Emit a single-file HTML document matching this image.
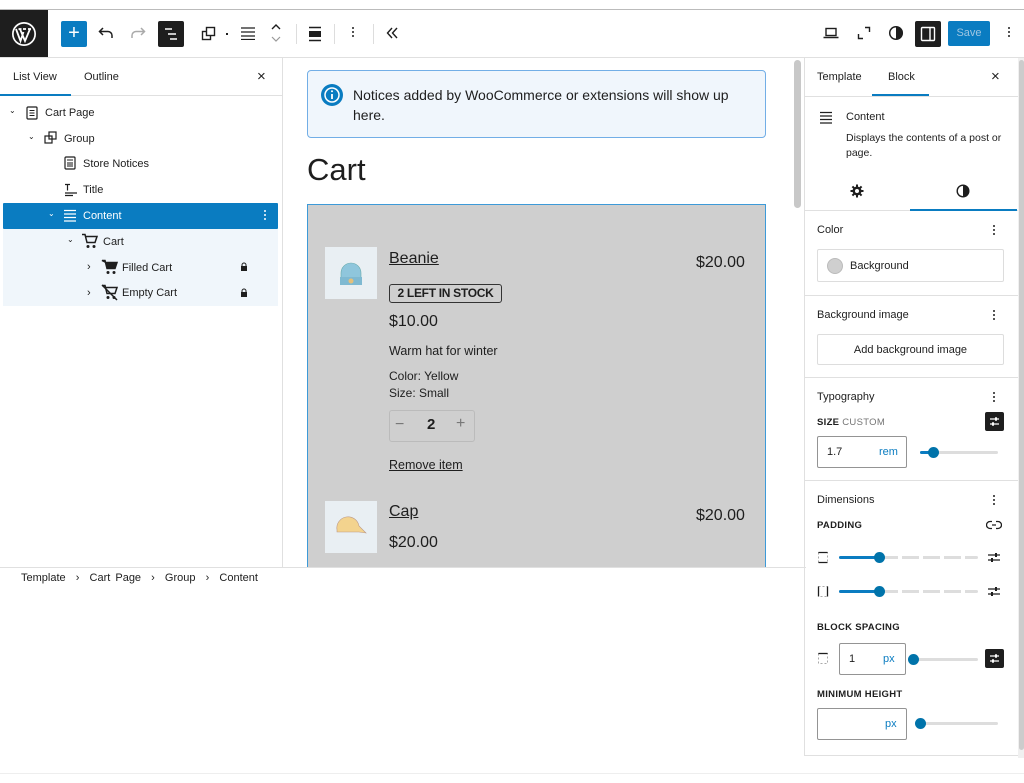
<!DOCTYPE html>
<html><head><meta charset="utf-8"><style>
*{box-sizing:border-box;margin:0;padding:0}
body{width:1024px;height:783px;overflow:hidden;background:#fff;font-family:"Liberation Sans",sans-serif;color:#1e1e1e;position:relative;font-size:11px}
.a{position:absolute}
.ic{position:absolute}
.hd{font-size:11px;font-weight:600;color:#1e1e1e}
.lbl{font-size:9.5px;font-weight:600;letter-spacing:.3px;color:#1e1e1e}
.dots{position:absolute;width:3px}
.dots i{display:block;width:2px;height:2px;background:#1e1e1e;border-radius:1px;margin:0 0 2px}
.track{position:absolute;height:3px;background:#ddd;border-radius:2px}
.knob{position:absolute;width:11px;height:11px;border-radius:50%;background:#0073aa}
.inp{position:absolute;border:1px solid #949494;border-radius:2px;background:#fff}
.tree{position:absolute;left:0;font-size:11px;color:#1e1e1e}
</style></head><body>
<!-- top strip -->
<div class="a" style="left:0;top:9px;width:1024px;height:1px;background:#bbb"></div>
<!-- toolbar -->
<div class="a" style="left:0;top:10px;width:48px;height:48px;background:#1e1e1e"></div>
<svg class="ic" style="left:11px;top:21px" width="26" height="26" viewBox="0 0 26 26"><circle cx="13" cy="13" r="12" fill="#fff"/><circle cx="13" cy="13" r="10.3" fill="#1e1e1e"/><path d="M5 8 L9.5 20 L12.5 11 M9 8 L14 20 L19 8 M7.5 8h3 M12 8h3 M17 8h3" stroke="#fff" stroke-width="1.8" fill="none"/></svg>
<div class="a" style="left:0;top:57px;width:1024px;height:1px;background:#e0e0e0"></div>
<div class="a" style="left:61px;top:21px;width:26px;height:26px;background:#0a7cc1;border-radius:2px;color:#fff;font-size:20px;line-height:25px;text-align:center">+</div>
<svg class="ic" style="left:98px;top:26px" width="16" height="14" viewBox="0 0 16 14"><path d="M5 2 L1.5 5.5 L5 9 M1.5 5.5 H10 A4 4 0 0 1 14 9.5 V12" stroke="#1e1e1e" stroke-width="1.5" fill="none"/></svg>
<svg class="ic" style="left:130px;top:26px" width="16" height="14" viewBox="0 0 16 14"><path d="M11 2 L14.5 5.5 L11 9 M14.5 5.5 H6 A4 4 0 0 0 2 9.5 V12" stroke="#aaa" stroke-width="1.5" fill="none"/></svg>
<div class="a" style="left:158px;top:21px;width:26px;height:26px;background:#1e1e1e;border-radius:2px"></div>
<svg class="ic" style="left:163px;top:27px" width="16" height="14"><path d="M2 2h7M5 7h8M7 12h7" stroke="#fff" stroke-width="1.6"/></svg>
<svg class="ic" style="left:201px;top:26px" width="16" height="16"><rect x="1.5" y="5.5" width="8" height="8" fill="none" stroke="#1e1e1e" stroke-width="1.4"/><rect x="5.5" y="1.5" width="8" height="8" fill="#fff" stroke="#1e1e1e" stroke-width="1.4"/></svg>
<div class="a" style="left:226px;top:33px;width:2px;height:2px;background:#1e1e1e"></div>
<svg class="ic" style="left:240px;top:26px" width="16" height="14"><path d="M1 2h14M1 6h14M1 10h14M1 13.5h14" stroke="#1e1e1e" stroke-width="1.3"/></svg>
<svg class="ic" style="left:270px;top:22px" width="12" height="22"><path d="M2 7l4-4 4 4" stroke="#1e1e1e" stroke-width="1.4" fill="none"/><path d="M2 15l4 4 4-4" stroke="#999" stroke-width="1.2" fill="none"/></svg>
<div class="a" style="left:296px;top:24px;width:1px;height:20px;background:#ddd"></div>
<svg class="ic" style="left:308px;top:26px" width="14" height="16"><path d="M1 1.5h12M1 14.5h12" stroke="#1e1e1e" stroke-width="1.4"/><rect x="1" y="5" width="12" height="6" fill="#1e1e1e"/></svg>
<div class="a" style="left:334px;top:24px;width:1px;height:20px;background:#ddd"></div>
<div class="dots" style="left:352px;top:27px"><i></i><i></i><i></i></div>
<div class="a" style="left:373px;top:24px;width:1px;height:20px;background:#ddd"></div>
<svg class="ic" style="left:386px;top:27px" width="12" height="12"><path d="M6 1L1.5 6 6 11M11 1L6.5 6 11 11" stroke="#1e1e1e" stroke-width="1.4" fill="none"/></svg>
<!-- right toolbar -->
<svg class="ic" style="left:823px;top:27px" width="16" height="12"><rect x="3" y="1.5" width="10" height="7" fill="none" stroke="#1e1e1e" stroke-width="1.4"/><path d="M0.5 10.5h15" stroke="#1e1e1e" stroke-width="1.5"/></svg>
<svg class="ic" style="left:857px;top:26px" width="14" height="14"><path d="M1.5 8v4.5h4.5M8 1.5h4.5v4.5" stroke="#1e1e1e" stroke-width="1.4" fill="none"/></svg>
<svg class="ic" style="left:888px;top:25px" width="16" height="16"><circle cx="8" cy="8" r="6.3" fill="none" stroke="#1e1e1e" stroke-width="1.5"/><path d="M8 1.7A6.3 6.3 0 0 1 8 14.3Z" fill="#1e1e1e"/></svg>
<div class="a" style="left:915px;top:21px;width:26px;height:26px;background:#1e1e1e;border-radius:2px"></div>
<svg class="ic" style="left:920px;top:26px" width="16" height="16"><rect x="1.5" y="1.5" width="13" height="13" rx="1" fill="none" stroke="#fff" stroke-width="1.4"/><path d="M10 2v12" stroke="#fff" stroke-width="1.4"/></svg>
<div class="a" style="left:948px;top:21px;width:42px;height:25px;background:#0a7cc1;border-radius:2px;color:#9fc6e2;font-size:11px;line-height:25px;text-align:center">Save</div>
<div class="dots" style="left:1008px;top:27px"><i></i><i></i><i></i></div>
<!-- left panel -->
<div class="a" style="left:282px;top:58px;width:1px;height:510px;background:#e0e0e0"></div>
<div class="a hd" style="left:13px;top:71px;font-weight:500">List View</div>
<div class="a hd" style="left:84px;top:71px;font-weight:500">Outline</div>
<div class="a" style="left:257px;top:68px;font-size:15px">×</div>
<div class="a" style="left:0;top:95px;width:282px;height:1px;background:#e0e0e0"></div>
<div class="a" style="left:0;top:94px;width:71px;height:2px;background:#0a7cc1"></div>
<div class="a" style="left:3px;top:229px;width:275px;height:77px;background:#f0f6fb"></div>
<div class="a" style="left:3px;top:203px;width:275px;height:26px;background:#0a7cc1;border-radius:1px"></div>
<div class="tree" style="left:9px;top:106px;font-size:8px">⌄</div>
<svg class="ic" style="left:26px;top:106px" width="12" height="14"><rect x="1" y="1" width="10" height="12" rx="1" fill="none" stroke="#1e1e1e" stroke-width="1.2"/><path d="M3.5 4.5h5M3.5 7h5M3.5 9.5h5" stroke="#1e1e1e"/></svg>
<div class="tree" style="left:45px;top:107px">Cart Page</div>
<div class="tree" style="left:28px;top:132px;font-size:8px">⌄</div>
<svg class="ic" style="left:44px;top:131px" width="14" height="14"><rect x="1" y="5" width="7" height="7" fill="none" stroke="#1e1e1e" stroke-width="1.2"/><rect x="5" y="1" width="7" height="7" fill="none" stroke="#1e1e1e" stroke-width="1.2"/></svg>
<div class="tree" style="left:64px;top:133px">Group</div>
<svg class="ic" style="left:64px;top:156px" width="12" height="14"><rect x="1" y="1" width="10" height="12" rx="1" fill="none" stroke="#1e1e1e" stroke-width="1.2"/><path d="M3 4h6" stroke="#1e1e1e"/><rect x="3" y="6" width="6" height="5" fill="#888"/></svg>
<div class="tree" style="left:83px;top:158px">Store Notices</div>
<svg class="ic" style="left:64px;top:183px" width="14" height="14"><path d="M1 1.5h5M3.5 1.5v6M1 10h12M1 12.5h8" stroke="#1e1e1e" stroke-width="1.2"/></svg>
<div class="tree" style="left:83px;top:184px">Title</div>
<div class="tree" style="left:48px;top:209px;font-size:8px;color:#fff">⌄</div>
<svg class="ic" style="left:63px;top:209px" width="14" height="14"><path d="M1 1.5h12M1 5h12M1 8.5h12M1 12h12" stroke="#fff" stroke-width="1.2"/></svg>
<div class="tree" style="left:83px;top:210px;color:#fff">Content</div>
<div class="dots" style="left:264px;top:210px"><i style="background:#fff"></i><i style="background:#fff"></i><i style="background:#fff"></i></div>
<div class="tree" style="left:67px;top:235px;font-size:8px">⌄</div>
<svg class="ic" style="left:81px;top:233px" width="17" height="16"><path d="M1 1.5h3l2 8h8l2-6H5" stroke="#1e1e1e" stroke-width="1.5" fill="none"/><circle cx="7" cy="13.5" r="1.5" fill="#1e1e1e"/><circle cx="13" cy="13.5" r="1.5" fill="#1e1e1e"/></svg>
<div class="tree" style="left:103px;top:236px">Cart</div>
<div class="tree" style="left:87px;top:261px">›</div>
<svg class="ic" style="left:101px;top:259px" width="17" height="16"><path d="M1 1.5h3l2 8h8l2-6H5z" stroke="#1e1e1e" stroke-width="1.5" fill="#1e1e1e"/><circle cx="7" cy="13.5" r="1.5" fill="#1e1e1e"/><circle cx="13" cy="13.5" r="1.5" fill="#1e1e1e"/></svg>
<div class="tree" style="left:122px;top:262px">Filled Cart</div>
<svg class="ic" style="left:240px;top:262px" width="8" height="9"><path d="M2 4V3a2 2 0 0 1 4 0v1" stroke="#1e1e1e" fill="none"/><rect x="1" y="4" width="6" height="5" fill="#1e1e1e"/></svg>
<div class="tree" style="left:87px;top:287px">›</div>
<svg class="ic" style="left:101px;top:284px" width="17" height="17"><path d="M1 1.5h3l2 8h8l2-6H5" stroke="#1e1e1e" stroke-width="1.5" fill="none"/><circle cx="7" cy="13.5" r="1.5" fill="#1e1e1e"/><circle cx="13" cy="13.5" r="1.5" fill="#1e1e1e"/><path d="M1 1l15 15" stroke="#1e1e1e" stroke-width="1.5"/></svg>
<div class="tree" style="left:122px;top:287px">Empty Cart</div>
<svg class="ic" style="left:240px;top:288px" width="8" height="9"><path d="M2 4V3a2 2 0 0 1 4 0v1" stroke="#1e1e1e" fill="none"/><rect x="1" y="4" width="6" height="5" fill="#1e1e1e"/></svg>
<!-- canvas -->
<div class="a" style="left:283px;top:58px;width:522px;height:510px;background:#fff"></div>
<div class="a" style="left:794px;top:60px;width:7px;height:148px;background:#c8c8c8;border-radius:4px"></div>
<div class="a" style="left:307px;top:70px;width:459px;height:68px;background:#f0f6fc;border:1px solid #72aee6;border-radius:4px"></div>
<svg class="ic" style="left:320px;top:83px" width="24" height="24"><circle cx="12" cy="12" r="11" fill="#0a7cc1"/><circle cx="12" cy="12" r="7" fill="none" stroke="#fff" stroke-width="1.5"/><path d="M12 11v5" stroke="#fff" stroke-width="1.8"/><circle cx="12" cy="8.3" r="1" fill="#fff"/></svg>
<div class="a" style="left:353px;top:85px;font-size:14px;line-height:20px;color:#1e1e1e;width:400px">Notices added by WooCommerce or extensions will show up here.</div>
<div class="a" style="left:307px;top:152px;font-size:31px;color:#1e1e1e">Cart</div>
<div class="a" style="left:307px;top:204px;width:459px;height:364px;background:#cfcfcf;border:1px solid #3d9ad8;border-bottom:none"></div>
<div class="a" style="left:325px;top:247px;width:52px;height:52px;background:#e9eff3"></div>
<svg class="ic" style="left:339px;top:259px" width="24" height="28"><path d="M2 14 A10 10 0 0 1 22 14 V24 H2Z" fill="#8fc6dc" stroke="#6aa" stroke-width=".6"/><rect x="1" y="18" width="22" height="8" fill="#7fb9d1"/><circle cx="12" cy="22" r="2.5" fill="#e5c07b"/></svg>
<div class="a" style="left:389px;top:250px;font-size:16px;text-decoration:underline">Beanie</div>
<div class="a" style="left:696px;top:254px;font-size:16px">$20.00</div>
<div class="a" style="left:389px;top:284px;width:113px;height:19px;border:1.5px solid #333;border-radius:3px;font-size:12px;font-weight:bold;line-height:16px;text-align:center;letter-spacing:-.3px">2 LEFT IN STOCK</div>
<div class="a" style="left:389px;top:313px;font-size:16px">$10.00</div>
<div class="a" style="left:389px;top:344px;font-size:12.5px">Warm hat for winter</div>
<div class="a" style="left:389px;top:368px;font-size:12px;line-height:17px">Color: Yellow<br>Size: Small</div>
<div class="a" style="left:389px;top:410px;width:86px;height:32px;border:1px solid #bbb;border-radius:3px"></div>
<div class="a" style="left:395px;top:416px;font-size:16px;color:#777">−</div>
<div class="a" style="left:427px;top:416px;font-size:15px;font-weight:bold">2</div>
<div class="a" style="left:456px;top:415px;font-size:16px;color:#777">+</div>
<div class="a" style="left:389px;top:458px;font-size:12.5px;text-decoration:underline">Remove item</div>
<div class="a" style="left:325px;top:501px;width:52px;height:52px;background:#e9eff3"></div>
<svg class="ic" style="left:333px;top:514px" width="36" height="24"><path d="M4 16 A11 11 0 0 1 26 12 L33 19 L26 18 L4 18Z" fill="#f3d38e" stroke="#b98" stroke-width=".6"/></svg>
<div class="a" style="left:389px;top:503px;font-size:16px;text-decoration:underline">Cap</div>
<div class="a" style="left:696px;top:507px;font-size:16px">$20.00</div>
<div class="a" style="left:389px;top:534px;font-size:16px">$20.00</div>
<!-- bottom area -->
<div class="a" style="left:0;top:567px;width:806px;height:1px;background:#e0e0e0"></div>
<div class="a" style="left:0;top:568px;width:806px;height:215px;background:#fff"></div>
<div class="a" style="left:21px;top:572px;font-size:11px;color:#1e1e1e;word-spacing:2px">Template &nbsp;›&nbsp; Cart Page &nbsp;›&nbsp; Group &nbsp;›&nbsp; Content</div>
<div class="a" style="left:0;top:773px;width:1024px;height:1px;background:#eee"></div>
<!-- right panel -->
<div class="a" style="left:804px;top:58px;width:1px;height:698px;background:#e0e0e0"></div>
<div class="a" style="left:1018px;top:58px;width:6px;height:700px;background:#f0f0f0"></div>
<div class="a" style="left:1019px;top:60px;width:5px;height:690px;background:#ccc;border-radius:3px"></div>
<div class="a" style="left:805px;top:755px;width:213px;height:1px;background:#e0e0e0"></div>
<div class="a hd" style="left:817px;top:71px;font-weight:500">Template</div>
<div class="a hd" style="left:888px;top:71px;font-weight:500">Block</div>
<div class="a" style="left:872px;top:94px;width:57px;height:2px;background:#0a7cc1"></div>
<div class="a" style="left:991px;top:68px;font-size:15px">×</div>
<div class="a" style="left:805px;top:96px;width:213px;height:1px;background:#e0e0e0"></div>
<svg class="ic" style="left:819px;top:111px" width="14" height="13"><path d="M1 1.5h12M1 5h12M1 8.5h12M1 12h12" stroke="#1e1e1e" stroke-width="1.2"/></svg>
<div class="a hd" style="left:846px;top:111px;font-weight:500">Content</div>
<div class="a" style="left:846px;top:131px;font-size:10.5px;line-height:15px;color:#1e1e1e;width:160px">Displays the contents of a post or page.</div>
<svg class="ic" style="left:850px;top:184px" width="14" height="14" viewBox="0 0 14 14"><g fill="#1e1e1e"><circle cx="7" cy="7" r="4.5"/><rect x="6" y="0.5" width="2" height="13"/><rect x="0.5" y="6" width="13" height="2"/><rect x="6" y="0.5" width="2" height="13" transform="rotate(45 7 7)"/><rect x="6" y="0.5" width="2" height="13" transform="rotate(-45 7 7)"/></g><circle cx="7" cy="7" r="2" fill="#fff"/></svg>
<svg class="ic" style="left:956px;top:184px" width="14" height="14"><circle cx="7" cy="7" r="5.8" fill="none" stroke="#1e1e1e" stroke-width="1.4"/><path d="M7 1.2A5.8 5.8 0 0 1 7 12.8Z" fill="#1e1e1e"/></svg>
<div class="a" style="left:805px;top:210px;width:213px;height:1px;background:#e0e0e0"></div>
<div class="a" style="left:910px;top:209px;width:107px;height:2px;background:#0a7cc1"></div>
<div class="a hd" style="left:817px;top:224px;font-weight:500">Color</div>
<div class="dots" style="left:993px;top:225px"><i></i><i></i><i></i></div>
<div class="a" style="left:817px;top:249px;width:187px;height:33px;border:1px solid #ddd;border-radius:2px"></div>
<div class="a" style="left:827px;top:258px;width:16px;height:16px;border-radius:50%;background:#cfcfcf;border:1px solid #bbb"></div>
<div class="a" style="left:850px;top:260px;font-size:11px">Background</div>
<div class="a" style="left:805px;top:295px;width:213px;height:1px;background:#e0e0e0"></div>
<div class="a hd" style="left:817px;top:309px;font-weight:500">Background image</div>
<div class="dots" style="left:993px;top:310px"><i></i><i></i><i></i></div>
<div class="a" style="left:817px;top:334px;width:187px;height:31px;border:1px solid #ddd;border-radius:2px;font-size:11px;text-align:center;line-height:30px">Add background image</div>
<div class="a" style="left:805px;top:377px;width:213px;height:1px;background:#e0e0e0"></div>
<div class="a hd" style="left:817px;top:391px;font-weight:500">Typography</div>
<div class="dots" style="left:993px;top:392px"><i></i><i></i><i></i></div>
<div class="a lbl" style="left:817px;top:417px">SIZE <span style="color:#757575;font-weight:500">CUSTOM</span></div>
<div class="a" style="left:985px;top:412px;width:19px;height:19px;background:#1e1e1e;border-radius:2px"></div>
<svg class="ic" style="left:987px;top:414px" width="15" height="15"><path d="M3 5h9M3 10h9" stroke="#fff" stroke-width="1.3"/><rect x="8" y="3.3" width="2" height="3.4" fill="#fff"/><rect x="5" y="8.3" width="2" height="3.4" fill="#fff"/></svg>
<div class="inp" style="left:817px;top:436px;width:90px;height:32px"></div>
<div class="a" style="left:827px;top:446px;font-size:11px">1.7</div>
<div class="a" style="left:879px;top:446px;font-size:11px;color:#0a7cc1">rem</div>
<div class="track" style="left:920px;top:451px;width:78px"></div>
<div class="track" style="left:920px;top:451px;width:14px;background:#0a7cc1"></div>
<div class="knob" style="left:928px;top:447px"></div>
<div class="a" style="left:805px;top:480px;width:213px;height:1px;background:#e0e0e0"></div>
<div class="a hd" style="left:817px;top:494px;font-weight:500">Dimensions</div>
<div class="dots" style="left:993px;top:495px"><i></i><i></i><i></i></div>
<div class="a lbl" style="left:817px;top:520px">PADDING</div>
<svg class="ic" style="left:986px;top:520px" width="16" height="10"><path d="M6 1.5H4a3.5 3.5 0 0 0 0 7h2M10 1.5h2a3.5 3.5 0 0 1 0 7h-2M6 5h4" stroke="#1e1e1e" stroke-width="1.3" fill="none"/></svg>
<svg class="ic" style="left:817px;top:551px" width="12" height="13"><rect x="1.5" y="1.5" width="9" height="10" fill="none" stroke="#aaa" stroke-dasharray="2 2"/><path d="M1.5 1.5h9M1.5 11.5h9" stroke="#1e1e1e" stroke-width="1.3"/></svg>
<div class="track" style="left:839px;top:556px;width:139px;background:repeating-linear-gradient(90deg,#ddd 0 17px,transparent 17px 21px)"></div>
<div class="track" style="left:839px;top:556px;width:40px;background:#0a7cc1"></div>
<div class="knob" style="left:874px;top:552px"></div>
<svg class="ic" style="left:987px;top:551px" width="14" height="13"><path d="M1 4h12M1 9h12" stroke="#1e1e1e" stroke-width="1.2"/><rect x="8" y="2" width="2" height="4" fill="#1e1e1e"/><rect x="4" y="7" width="2" height="4" fill="#1e1e1e"/></svg>
<svg class="ic" style="left:817px;top:585px" width="12" height="13"><rect x="1.5" y="1.5" width="9" height="10" fill="none" stroke="#aaa" stroke-dasharray="2 2"/><path d="M1.5 1.5v10M10.5 1.5v10" stroke="#1e1e1e" stroke-width="1.3"/></svg>
<div class="track" style="left:839px;top:590px;width:139px;background:repeating-linear-gradient(90deg,#ddd 0 17px,transparent 17px 21px)"></div>
<div class="track" style="left:839px;top:590px;width:40px;background:#0a7cc1"></div>
<div class="knob" style="left:874px;top:586px"></div>
<svg class="ic" style="left:987px;top:585px" width="14" height="13"><path d="M1 4h12M1 9h12" stroke="#1e1e1e" stroke-width="1.2"/><rect x="8" y="2" width="2" height="4" fill="#1e1e1e"/><rect x="4" y="7" width="2" height="4" fill="#1e1e1e"/></svg>
<div class="a lbl" style="left:817px;top:622px">BLOCK SPACING</div>
<svg class="ic" style="left:817px;top:652px" width="12" height="13"><rect x="1.5" y="1.5" width="9" height="10" fill="none" stroke="#aaa" stroke-dasharray="2 2"/><path d="M1.5 1.5h9" stroke="#1e1e1e" stroke-width="1.3"/></svg>
<div class="inp" style="left:839px;top:643px;width:67px;height:32px"></div>
<div class="a" style="left:849px;top:653px;font-size:11px">1</div>
<div class="a" style="left:883px;top:653px;font-size:11px;color:#0a7cc1">px</div>
<div class="track" style="left:912px;top:658px;width:66px"></div>
<div class="knob" style="left:908px;top:654px"></div>
<div class="a" style="left:985px;top:649px;width:19px;height:19px;background:#1e1e1e;border-radius:2px"></div>
<svg class="ic" style="left:987px;top:651px" width="15" height="15"><path d="M3 5h9M3 10h9" stroke="#fff" stroke-width="1.3"/><rect x="8" y="3.3" width="2" height="3.4" fill="#fff"/><rect x="5" y="8.3" width="2" height="3.4" fill="#fff"/></svg>
<div class="a lbl" style="left:817px;top:689px">MINIMUM HEIGHT</div>
<div class="inp" style="left:817px;top:708px;width:90px;height:32px"></div>
<div class="a" style="left:885px;top:718px;font-size:11px;color:#0a7cc1">px</div>
<div class="track" style="left:918px;top:722px;width:80px"></div>
<div class="knob" style="left:915px;top:718px"></div>
</body></html>
